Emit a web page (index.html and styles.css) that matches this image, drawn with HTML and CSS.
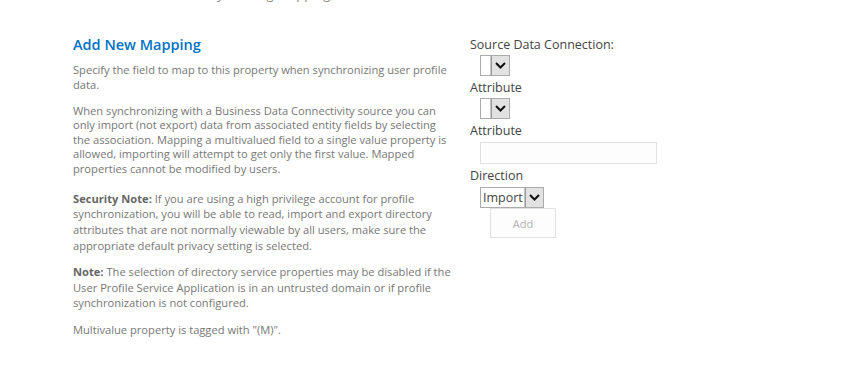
FILE: index.html
```html
<!DOCTYPE html>
<html lang="en">
<head>
    <meta charset="UTF-8">
    <title>Add New Mapping</title>
    <link rel="stylesheet" href="styles.css">
</head>
<body>
    <div class="page-desc">Modify existing mapping</div>
    <div class="section">
        <div class="description">
            <h2>Add New Mapping</h2>
            <p>Specify the field to map to this property when synchronizing user profile data.</p>
            <p class="bdc">When synchronizing with a Business Data Connectivity source you can only import (not export) data from associated entity fields by selecting the association. Mapping a multivalued field to a single value property is allowed, importing will attempt to get only the first value. Mapped properties cannot be modified by users.</p>
            <p class="loose security"><b>Security Note:</b> If you are using a high privilege account for profile synchronization, you will be able to read, import and export directory attributes that are not normally viewable by all users, make sure the appropriate default privacy setting is selected.</p>
            <p class="loose"><b>Note:</b> The selection of directory service properties may be disabled if the User Profile Service Application is in an untrusted domain or if profile synchronization is not configured.</p>
            <p>Multivalue property is tagged with "(M)".</p>
        </div>
        <div class="fields">
            <label>Source Data Connection:</label>
            <div class="control">
                <div class="select">
                    <span class="value"></span>
                    <span class="arrow"><svg width="13" height="9" viewBox="0 0 13 9"><path d="M2 2 L6.5 6.5 L11 2" fill="none" stroke="#111" stroke-width="2"/></svg></span>
                </div>
            </div>
            <label>Attribute</label>
            <div class="control">
                <div class="select">
                    <span class="value"></span>
                    <span class="arrow"><svg width="13" height="9" viewBox="0 0 13 9"><path d="M2 2 L6.5 6.5 L11 2" fill="none" stroke="#111" stroke-width="2"/></svg></span>
                </div>
            </div>
            <label>Attribute</label>
            <div class="control spaced">
                <input type="text" class="text-input" disabled>
            </div>
            <label>Direction</label>
            <div class="control spaced">
                <div class="select">
                    <span class="value">Import</span>
                    <span class="arrow"><svg width="13" height="9" viewBox="0 0 13 9"><path d="M2 2 L6.5 6.5 L11 2" fill="none" stroke="#111" stroke-width="2"/></svg></span>
                </div>
            </div>
            <div class="button-row">
                <button disabled>Add</button>
            </div>
        </div>
    </div>
</body>
</html>
```

FILE: styles.css
```css
body {
    font-family: "Open Sans", "Noto Sans", sans-serif;
    background-color: #ffffff;
    color: #777777;
    margin: 0;
}
.page-desc {
    margin: -15px 0 0 182px;
    font-size: 13px;
    line-height: 18px;
    height: 3px;
    color: #888888;
}
.section {
    display: flex;
    padding: 48px 0 0 73px;
}
.description {
    width: 378px;
    font-size: 11.15px;
    line-height: 14.5px;
}
h2 {
    font-size: 14.5px;
    font-weight: 600;
    color: #0072c6;
    margin: 0 0 9px 0;
    line-height: 18px;
}
p {
    margin: 0 0 11.5px 0;
}
p.bdc {
    margin-bottom: 14.5px;
}
p.loose {
    line-height: 15.9px;
}
p.security {
    margin-bottom: 9.5px;
}
p b {
    color: #666666;
    font-weight: 700;
}
.fields {
    margin-left: 19px;
    font-size: 12.5px;
    color: #444444;
}
label {
    display: block;
    line-height: 18px;
}
.control {
    padding-left: 10px;
    margin: 1px 0 3px 0;
}
.control.spaced {
    margin-top: 2px;
}
.select {
    display: flex;
    width: max-content;
    height: 19px;
    border: 1px solid #ababab;
    background-color: #ffffff;
}
.select .value {
    min-width: 6px;
    padding: 0 1px 0 2px;
    line-height: 19px;
    color: #444444;
    border-right: 1px solid #c6c6c6;
}
.select .arrow {
    display: flex;
    align-items: center;
    justify-content: center;
    width: 17px;
    background-color: #e2e2e2;
    border-left: 1px solid #9a9a9a;
}
.text-input {
    display: block;
    width: 177px;
    height: 22px;
    box-sizing: border-box;
    border: 1px solid #e1e1e1;
    background-color: #fdfdfd;
}
.button-row {
    padding-left: 20px;
    margin-top: -3px;
}
button {
    display: block;
    width: 66px;
    height: 30px;
    font-family: inherit;
    font-size: 11px;
    color: #b1b1b1;
    background-color: #fdfdfd;
    border: 1px solid #e1e1e1;
}
```
